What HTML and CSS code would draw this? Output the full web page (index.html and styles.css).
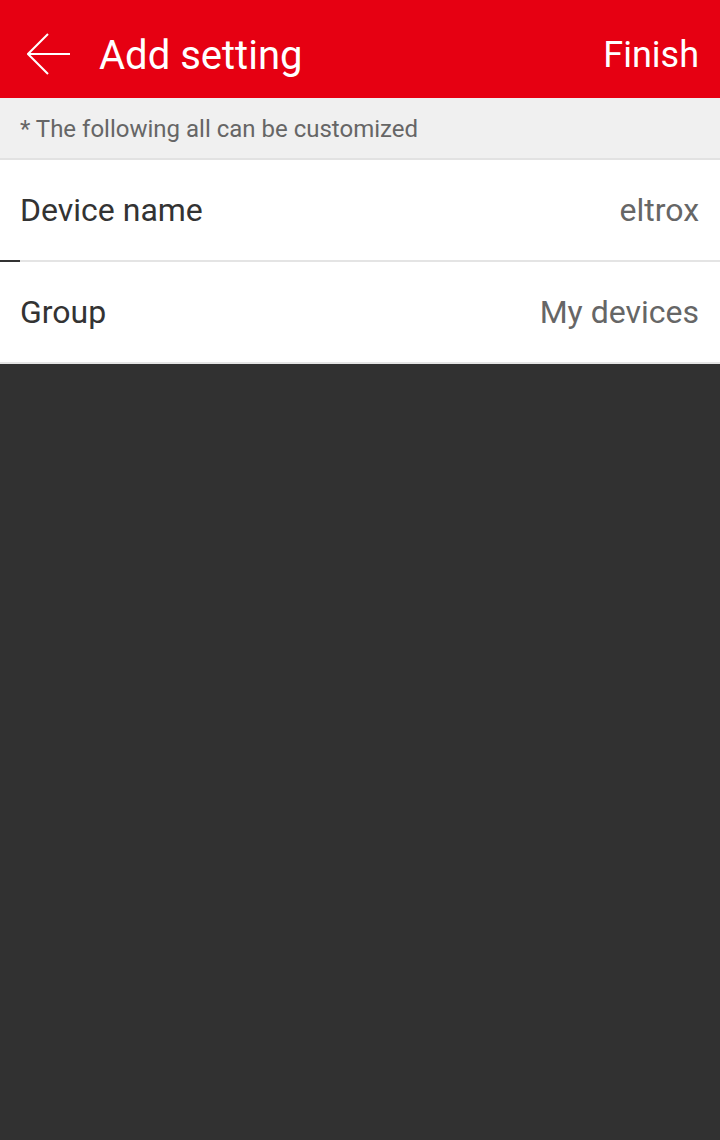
FILE: index.html
```html
<!DOCTYPE html>
<html>

<head>
    <link rel="stylesheet" href="styles.css">
</head>

<body>
    <div class="page">
        <div class="header">
            <svg class="back" width="44" height="44" viewBox="0 0 44 44">
                <path d="M21 1 L1 21 L21 41 M1 21 L43 21" fill="none" stroke="#ffffff" stroke-width="2"/>
            </svg>
            <div class="title">Add setting</div>
            <div class="finish">Finish</div>
        </div>

        <div class="notice">* The following all can be customized</div>

        <div class="row first">
            <span class="label">Device name</span>
            <span class="value">eltrox</span>
        </div>
        <div class="row">
            <span class="label">Group</span>
            <span class="value">My devices</span>
        </div>

        <div class="rest"></div>
    </div>
</body>
</html>
```

FILE: styles.css
```css
body,
html {
    margin: 0;
    height: 100%;
}

body {
    font-family: Roboto, "Noto Sans", sans-serif;
    background: #313131;
}

.page {
    display: flex;
    flex-direction: column;
    height: 100%;
}

.header {
    background: #e60012;
    height: 98px;
    display: flex;
    align-items: center;
    padding: 0 21px 0 27px;
    color: #ffffff;
}

.back {
    margin-top: 12px;
}

.title {
    font-size: 40px;
    margin-left: 28px;
    flex: 1;
    padding-top: 12px;
}

.finish {
    font-size: 36px;
    padding-top: 12px;
}

.notice {
    background: #f0f0f0;
    height: 60px;
    line-height: 62px;
    padding-left: 20px;
    font-size: 24px;
    color: #666666;
    border-bottom: 2px solid #e2e2e2;
}

.row {
    background: #ffffff;
    height: 100px;
    display: flex;
    align-items: center;
    justify-content: space-between;
    padding: 0 21px 0 20px;
    border-bottom: 2px solid #e4e4e4;
    font-size: 32px;
    position: relative;
}

.row.first::after {
    content: "";
    position: absolute;
    left: 0;
    bottom: -2px;
    width: 20px;
    height: 2px;
    background: #333333;
}

.label {
    color: #333333;
}

.value {
    color: #666666;
}

.rest {
    flex: 1;
    background: #313131;
}
```
